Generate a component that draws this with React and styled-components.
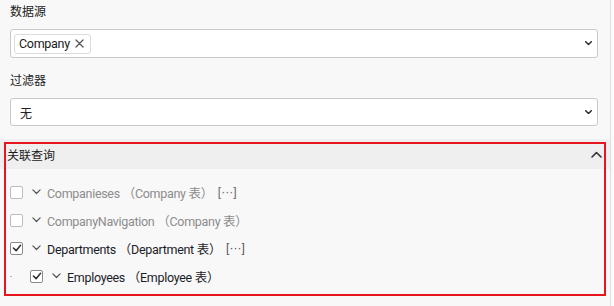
import React from 'react'
import styled, { createGlobalStyle } from 'styled-components'

const GlobalStyle = createGlobalStyle`
    html, body {
        margin: 0;
        padding: 0;
        background: #fbfbfb;
    }
    body {
        font-family: Roboto, "Noto Sans CJK SC", sans-serif;
        font-size: 12px;
        color: #222;
    }
`

const relations = [
    { name: 'Companieses', table: 'Company', checked: false, muted: true, more: true, level: 0 },
    { name: 'CompanyNavigation', table: 'Company', checked: false, muted: true, more: false, level: 0 },
    { name: 'Departments', table: 'Department', checked: true, muted: false, more: true, level: 0 },
    { name: 'Employees', table: 'Employee', checked: true, muted: false, more: false, level: 1 },
]

const ChevronDown = ({ size = 8, bold }) => (
    <svg width={size} height={size * 0.6} viewBox="0 0 10 6" fill="none">
        <path d="M1 1l4 4 4-4" stroke={bold ? '#333' : '#555'} strokeWidth={bold ? 2.2 : 1.4} strokeLinecap="round" strokeLinejoin="round" />
    </svg>
)

const ChevronUp = () => (
    <svg width="11" height="7" viewBox="0 0 11 7" fill="none">
        <path d="M1 6l4.5-4.5L10 6" stroke="#333" strokeWidth="1.6" strokeLinecap="round" strokeLinejoin="round" />
    </svg>
)

const Check = () => (
    <svg width="10" height="8" viewBox="0 0 11 9" fill="none">
        <path d="M1.5 4.5l3 3 5-6" stroke="#333" strokeWidth="1.8" strokeLinecap="round" strokeLinejoin="round" />
    </svg>
)

const Close = () => (
    <svg width="9" height="9" viewBox="0 0 9 9" fill="none">
        <path d="M1 1l7 7M8 1L1 8" stroke="#555" strokeWidth="1.3" strokeLinecap="round" />
    </svg>
)

const App = () => {
    return (
        <>
            <GlobalStyle />
            <Page>
                <Panel>
                    <FormSection>
                        <FieldLabel>数据源</FieldLabel>
                        <Select>
                            <Tag>
                                Company
                                <Close />
                            </Tag>
                            <SelectArrow><ChevronDown size={7} bold /></SelectArrow>
                        </Select>
                        <FieldLabel>过滤器</FieldLabel>
                        <Select $short>
                            <SelectValue>无</SelectValue>
                            <SelectArrow><ChevronDown size={7} bold /></SelectArrow>
                        </Select>
                    </FormSection>

                    <Collapse>
                        <CollapseHeader>
                            <span>关联查询</span>
                            <ChevronUp />
                        </CollapseHeader>
                        <CollapseBody>
                            {relations.map((r) => (
                                <Row key={r.name} $level={r.level}>
                                    {r.level > 0 && <TreeDot />}
                                    <Checkbox $checked={r.checked}>{r.checked && <Check />}</Checkbox>
                                    <Expander><ChevronDown size={9} /></Expander>
                                    <RowText $muted={r.muted}>
                                        {r.name} （{r.table} 表）
                                    </RowText>
                                    {r.more && <More $muted={r.muted}>[···]</More>}
                                </Row>
                            ))}
                        </CollapseBody>
                        <Highlight />
                    </Collapse>
                </Panel>
            </Page>
        </>
    )
}

const Page = styled.div`
    width: 614px;
    height: 306px;
    display: flex;
    overflow: hidden;
`

const Panel = styled.div`
    width: 610px;
    height: 306px;
    background: #f8f8f8;
    border-right: 1px solid #dedede;
    display: flex;
    flex-direction: column;
`

const FormSection = styled.div`
    padding: 4px 12px 13px 10px;
    display: flex;
    flex-direction: column;
`

const FieldLabel = styled.div`
    line-height: 17px;
    font-size: 12px;
    color: #222;
    margin-bottom: 8px;
`

const Select = styled.div`
    height: ${(p) => (p.$short ? '26px' : '27px')};
    margin-bottom: ${(p) => (p.$short ? '0' : '15px')};
    background: #fff;
    border: 1px solid #c9c9c9;
    border-radius: 3px;
    display: flex;
    align-items: center;
    padding: 0 5px 0 3px;
`

const Tag = styled.div`
    height: 18px;
    border: 1px solid #dcdcdc;
    border-radius: 3px;
    padding: 0 6px 0 4px;
    display: flex;
    align-items: center;
    gap: 5px;
    font-size: 12.5px;
    letter-spacing: -0.3px;
    color: #1a1a1a;
`

const SelectValue = styled.span`
    padding-left: 6px;
    font-size: 12px;
    color: #222;
`

const SelectArrow = styled.span`
    margin-left: auto;
    display: flex;
    align-items: center;
`

const Collapse = styled.div`
    position: relative;
    border-top: 1px solid #f0f0f0;
    flex: 1;
`

const CollapseHeader = styled.div`
    height: 29px;
    background: #efefef;
    display: flex;
    align-items: center;
    justify-content: space-between;
    padding: 0 8px 0 7px;
    font-size: 12px;
    color: #1a1a1a;
`

const CollapseBody = styled.div`
    padding-top: 9px;
    display: flex;
    flex-direction: column;
`

const Row = styled.div`
    height: 28px;
    display: flex;
    align-items: center;
    padding-left: ${(p) => 10 + p.$level * 20}px;
    position: relative;
`

const TreeDot = styled.span`
    position: absolute;
    left: 10px;
    top: 14px;
    width: 2px;
    height: 1px;
    background: #bbb;
`

const Checkbox = styled.span`
    width: 11px;
    height: 11px;
    border: 1px solid ${(p) => (p.$checked ? '#8a8a8a' : '#bdbdbd')};
    border-radius: 2px;
    background: #fff;
    display: flex;
    align-items: center;
    justify-content: center;
    flex-shrink: 0;
`

const Expander = styled.span`
    width: 9px;
    margin-left: 9px;
    margin-right: 6px;
    display: flex;
    align-items: center;
`

const RowText = styled.span`
    font-size: 12.5px;
    letter-spacing: -0.3px;
    color: ${(p) => (p.$muted ? '#8c8c8c' : '#1c1c28')};
    white-space: pre;
`

const More = styled.span`
    margin-left: 5px;
    font-family: "Liberation Sans", sans-serif;
    font-size: 12px;
    line-height: 1;
    color: ${(p) => (p.$muted ? '#666' : '#555')};
`

const Highlight = styled.div`
    position: absolute;
    top: 2px;
    left: 4px;
    width: 598px;
    height: 150px;
    border: 2px solid #e8141e;
    pointer-events: none;
`

export default App
